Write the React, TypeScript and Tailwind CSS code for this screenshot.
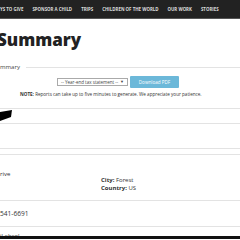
export default function App() {
  const nav = ["SPONSOR A CHILD", "TRIPS", "CHILDREN OF THE WORLD", "OUR WORK", "STORIES"];
  return (
    <div className="h-[240px] w-[240px] overflow-hidden bg-white font-['Open_Sans',sans-serif] text-[#333]">
      <div className="flex h-[19px] items-center gap-[9px] border-b border-[#555] bg-[#222] text-[4.4px] font-bold text-[#ddd]">
        <span>YS TO GIVE</span>
        {nav.map((n) => (
          <span key={n}>{n}</span>
        ))}
      </div>

      <h1 className="-ml-[3px] mt-[11px] text-[17px] font-extrabold leading-[20px] text-[#222]">Summary</h1>

      <div className="mt-[13px] flex items-center gap-[6px]">
        <span className="text-[6px] leading-[8px] text-[#444]">mmary</span>
        <div className="h-px flex-1 bg-[#e3e3e3]" />
      </div>

      <div className="mt-[5px] flex items-center justify-center gap-[2px] pr-[4px]">
        <div className="flex h-[8px] w-[71px] items-center justify-between border border-[#aaa] px-[3px] text-[4.5px] text-[#444]">
          <span>-- Year-end tax statement --</span>
          <span className="text-[4px]">▼</span>
        </div>
        <div className="flex h-[12px] w-[49px] items-center justify-center rounded-[1px] bg-[#6cb8d9] text-[4.6px] text-white">
          Download PDF
        </div>
      </div>

      <p className="mt-[2px] pl-[20px] text-[4.6px] leading-[8px] text-[#333]">
        <b>NOTE:</b> Reports can take up to five minutes to generate. We appreciate your patience.
      </p>

      <div className="mt-[10px] h-px bg-[#e3e3e3]" />
      <div className="h-[14px]">
        <svg width="14" height="14" viewBox="0 0 14 14" className="block">
          <polygon points="0,3 12,1 11,8 0,12" fill="#000" />
        </svg>
      </div>
      <div className="h-px bg-[#e3e3e3]" />
      <div className="h-[24px]" />
      <div className="h-px bg-[#e3e3e3]" />
      <div className="h-[5px]" />
      <div className="h-px bg-[#e3e3e3]" />

      <div className="flex pt-[15px] text-[6px] leading-[8px] text-[#333]">
        <div className="w-[101px]">rive</div>
        <div className="mt-[6px]">
          <div><b>City:</b> Forest</div>
          <div><b>Country:</b> US</div>
        </div>
      </div>

      <div className="mt-[8px] h-px bg-[#e3e3e3]" />
      <div className="py-[8px] text-[6.6px] leading-[9px]">541-6691</div>
      <div className="h-px bg-[#e3e3e3]" />
      <div className="mt-[5px] h-[4px] overflow-hidden text-[6px] leading-[8px] text-[#333]">il.ebsol</div>
      <div className="h-[3px] bg-[#111]" />
    </div>
  );
}
